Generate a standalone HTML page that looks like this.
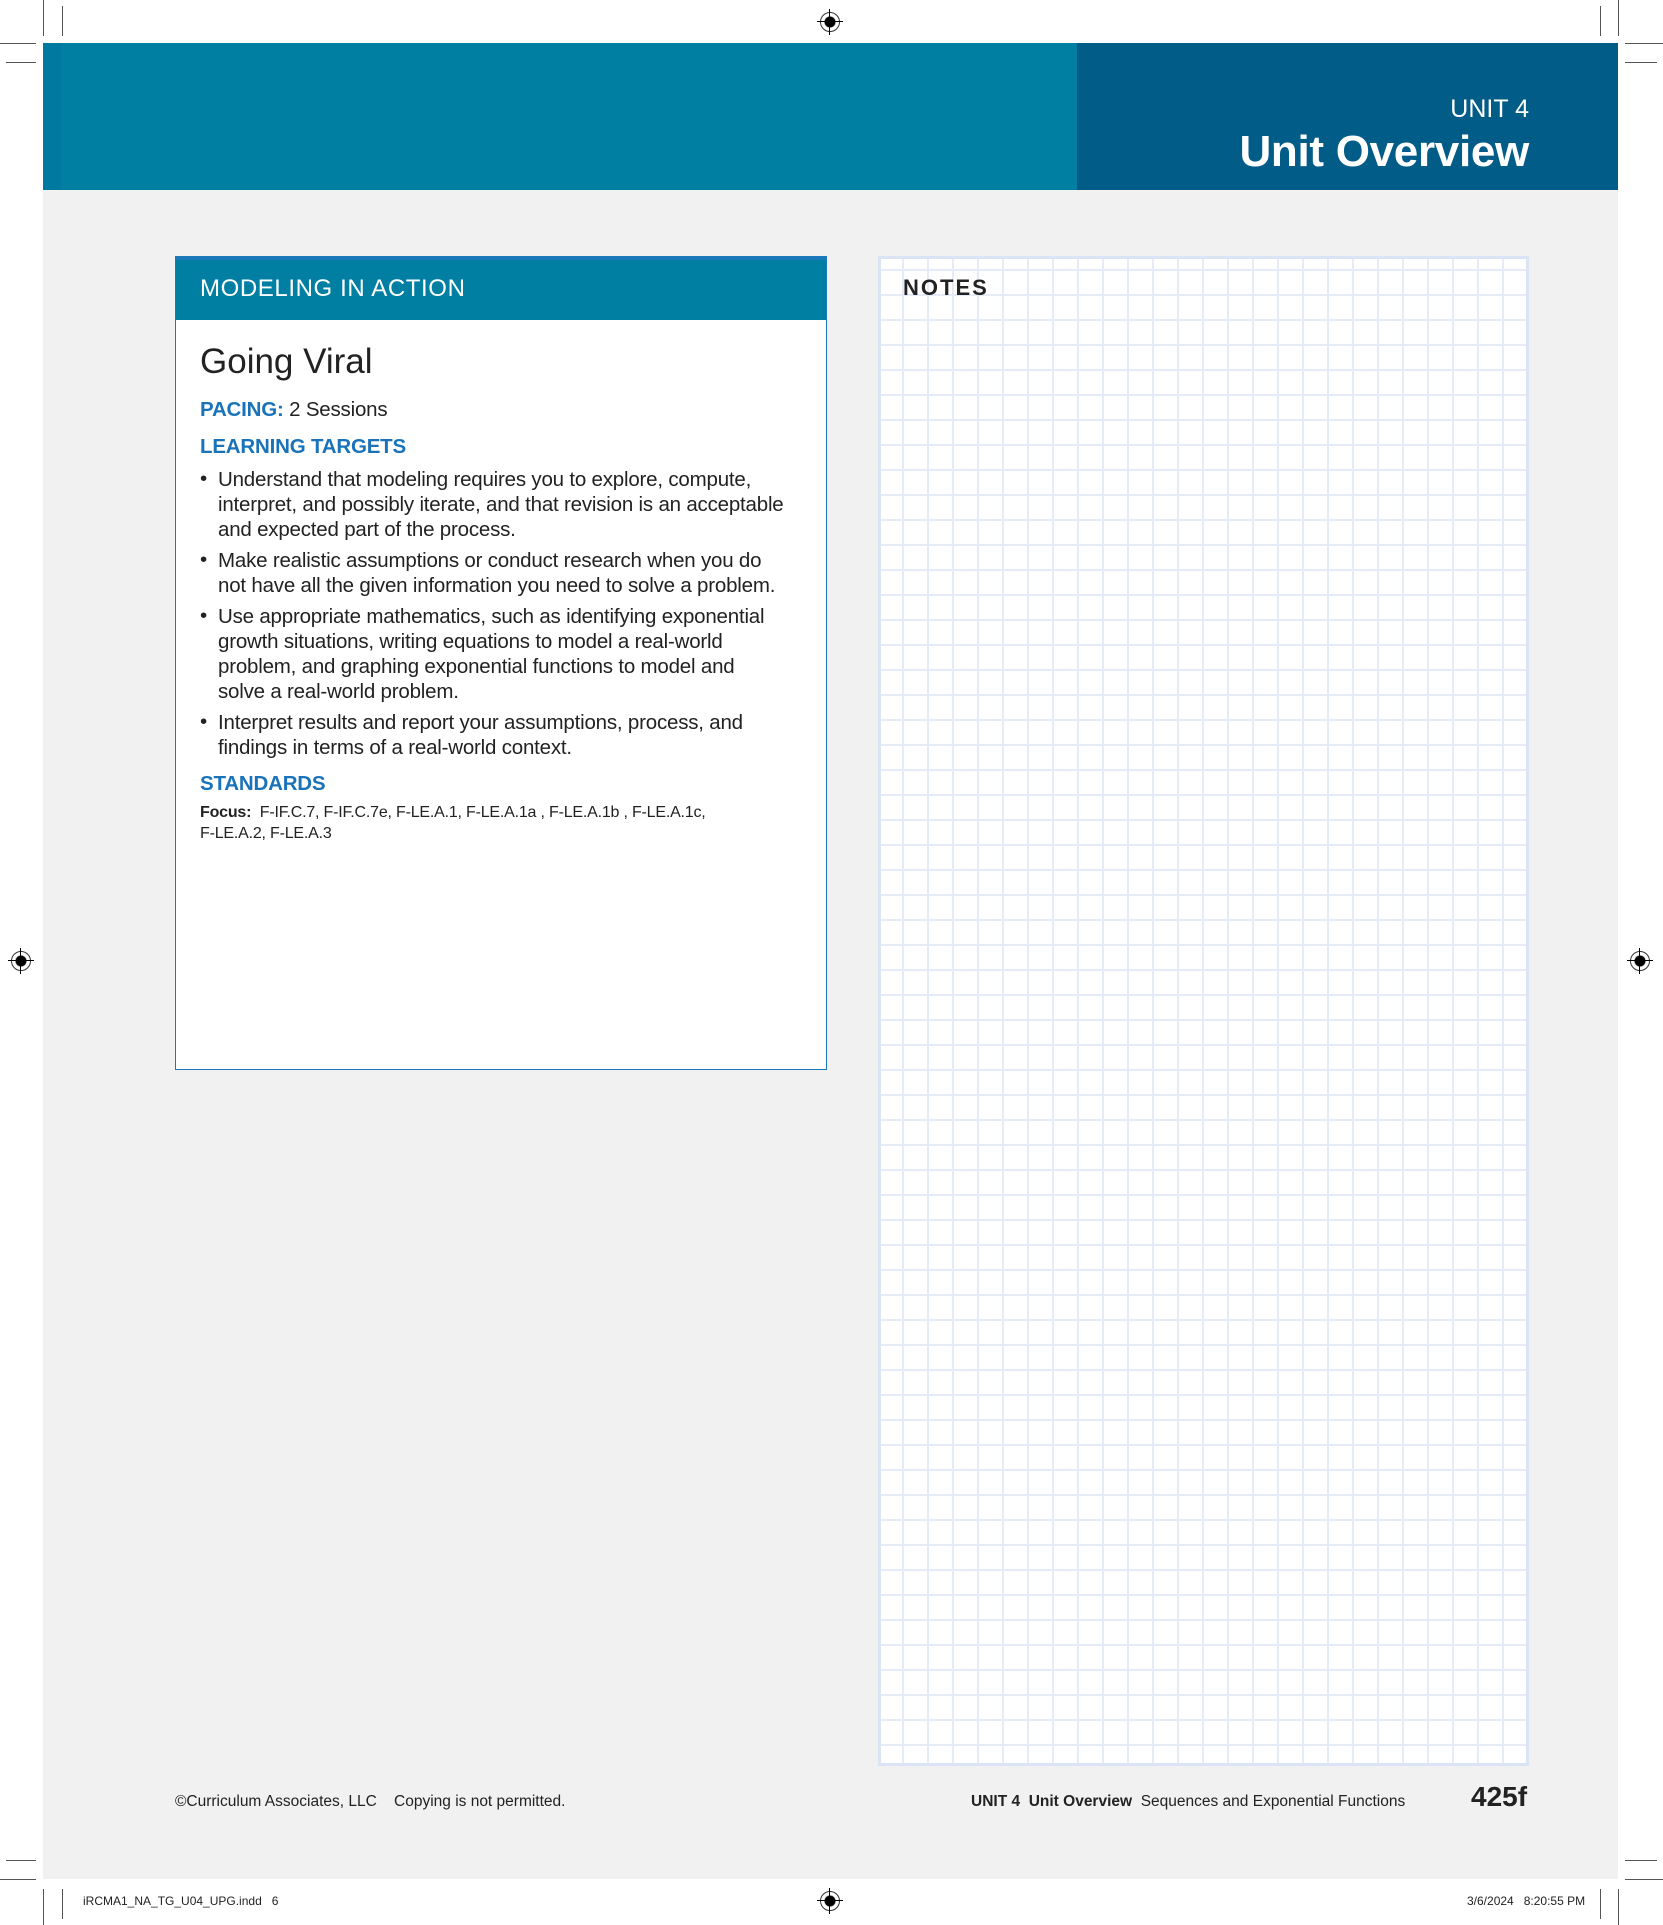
<!DOCTYPE html>
<html><head><meta charset="utf-8"><style>
*{margin:0;padding:0;box-sizing:border-box}
body{width:1663px;height:1925px;position:relative;background:#fff;font-family:"Liberation Sans",sans-serif;overflow:hidden;color:#222}
.a{position:absolute;white-space:nowrap}
.gray{position:absolute;left:43px;top:190px;width:1575px;height:1689px;background:#f0f1f0}
.hdr{position:absolute;left:43px;top:43px;width:1575px;height:147px;background:#007fa3;border-left:18px solid #0079a0}
.hdr2{position:absolute;left:1077px;top:43px;width:541px;height:147px;background:#025c88}
.box{position:absolute;left:175px;top:256px;width:652px;height:814px;background:#fff;border:1.5px solid #1b79b9}
.bh{position:absolute;left:0;top:0;right:0;height:63px;background:#007fa3;border-top:3px solid #1b79b9}
.notes{position:absolute;left:878px;top:256px;width:651px;height:1510px;border:3px solid #dbe4f4;background-color:#fff;
background-image:linear-gradient(to right,#e6ecf7 2px,transparent 2px),linear-gradient(to bottom,#e6ecf7 2px,transparent 2px);background-size:25px 25px;background-position:21px 10px}
.t{font-size:20.5px;color:#222;letter-spacing:-0.2px}
.blue{color:#1a73b8 !important;font-weight:bold}
.reg{position:absolute;width:20px;height:20px;border-radius:50%;border:1.5px solid #333;background:radial-gradient(circle,#000 0 5px,transparent 6px)}
.reg:before{content:"";position:absolute;left:-4px;right:-4px;top:8px;height:1px;background:#000}
.reg:after{content:"";position:absolute;top:-4px;bottom:-4px;left:8px;width:1px;background:#000}
.vl{position:absolute;width:1px;background:#555}.hl{position:absolute;height:1px;background:#555}
</style></head><body>
<div class="gray"></div>
<div class="hdr"></div><div class="hdr2"></div>
<div class="a" style="right:134px;top:95px;font-size:25px;color:#fff;">UNIT 4</div>
<div class="a" style="right:134px;top:127px;font-size:44px;color:#fff;font-weight:bold;letter-spacing:-0.3px">Unit Overview</div>

<div class="box"><div class="bh"></div>
<div class="a" style="left:24px;top:18px;font-size:24px;color:#fff;letter-spacing:0.6px">MODELING IN ACTION</div>
</div>
<div class="a" style="left:200px;top:342px;font-size:35px;color:#222">Going Viral</div>
<div class="a t" style="left:200px;top:398px"><span class="blue">PACING:</span> 2 Sessions</div>
<div class="a t blue" style="left:200px;top:435px">LEARNING TARGETS</div>
<div class="a t" style="left:200px;top:467px">•</div>
<div class="a t" style="left:218px;top:467px;line-height:25px">Understand that modeling requires you to explore, compute,<br>interpret, and possibly iterate, and that revision is an acceptable<br>and expected part of the process.</div>
<div class="a t" style="left:200px;top:548px">•</div>
<div class="a t" style="left:218px;top:548px;line-height:25px">Make realistic assumptions or conduct research when you do<br>not have all the given information you need to solve a problem.</div>
<div class="a t" style="left:200px;top:604px">•</div>
<div class="a t" style="left:218px;top:604px;line-height:25px">Use appropriate mathematics, such as identifying exponential<br>growth situations, writing equations to model a real-world<br>problem, and graphing exponential functions to model and<br>solve a real-world problem.</div>
<div class="a t" style="left:200px;top:710px">•</div>
<div class="a t" style="left:218px;top:710px;line-height:25px">Interpret results and report your assumptions, process, and<br>findings in terms of a real-world context.</div>
<div class="a t blue" style="left:200px;top:772px">STANDARDS</div>
<div class="a" style="left:200px;top:802px;font-size:16px;line-height:21px;letter-spacing:-0.2px"><b>Focus:</b>&nbsp; F-IF.C.7, F-IF.C.7e, F-LE.A.1, F-LE.A.1a , F-LE.A.1b , F-LE.A.1c,<br>F-LE.A.2, F-LE.A.3</div>

<div class="notes"></div>
<div class="a" style="left:903px;top:275px;font-size:22px;font-weight:bold;letter-spacing:2px;color:#222">NOTES</div>

<div class="a" style="left:175px;top:1793px;font-size:15.5px">©Curriculum Associates, LLC &nbsp;&nbsp; Copying is not permitted.</div>
<div class="a" style="left:971px;top:1793px;font-size:15.5px"><b>UNIT 4 &nbsp;Unit Overview</b> &nbsp;Sequences and Exponential Functions</div>
<div class="a" style="left:1471px;top:1781px;font-size:28px;font-weight:bold">425f</div>

<div class="a" style="left:83px;top:1894px;font-size:12px">iRCMA1_NA_TG_U04_UPG.indd &nbsp;&nbsp;6</div>
<div class="a" style="left:1467px;top:1894px;font-size:12px">3/6/2024 &nbsp;&nbsp;8:20:55 PM</div>

<div class="reg" style="left:820px;top:12px"></div>
<div class="reg" style="left:11px;top:951px"></div>
<div class="reg" style="left:1630px;top:951px"></div>
<div class="reg" style="left:820px;top:1891px"></div>
<div class="vl" style="left:43px;top:0;height:36px"></div><div class="vl" style="left:62px;top:6px;height:30px"></div>
<div class="vl" style="left:1618px;top:0;height:36px"></div><div class="vl" style="left:1600px;top:6px;height:30px"></div>
<div class="hl" style="left:0;top:43px;width:36px"></div><div class="hl" style="left:6px;top:62px;width:30px"></div>
<div class="hl" style="left:1625px;top:43px;width:38px"></div><div class="hl" style="left:1625px;top:62px;width:32px"></div>
<div class="vl" style="left:43px;top:1889px;height:36px"></div><div class="vl" style="left:62px;top:1889px;height:30px"></div>
<div class="vl" style="left:1618px;top:1889px;height:36px"></div><div class="vl" style="left:1600px;top:1889px;height:30px"></div>
<div class="hl" style="left:0;top:1879px;width:36px"></div><div class="hl" style="left:6px;top:1860px;width:30px"></div>
<div class="hl" style="left:1625px;top:1879px;width:38px"></div><div class="hl" style="left:1625px;top:1860px;width:32px"></div>
</body></html>
